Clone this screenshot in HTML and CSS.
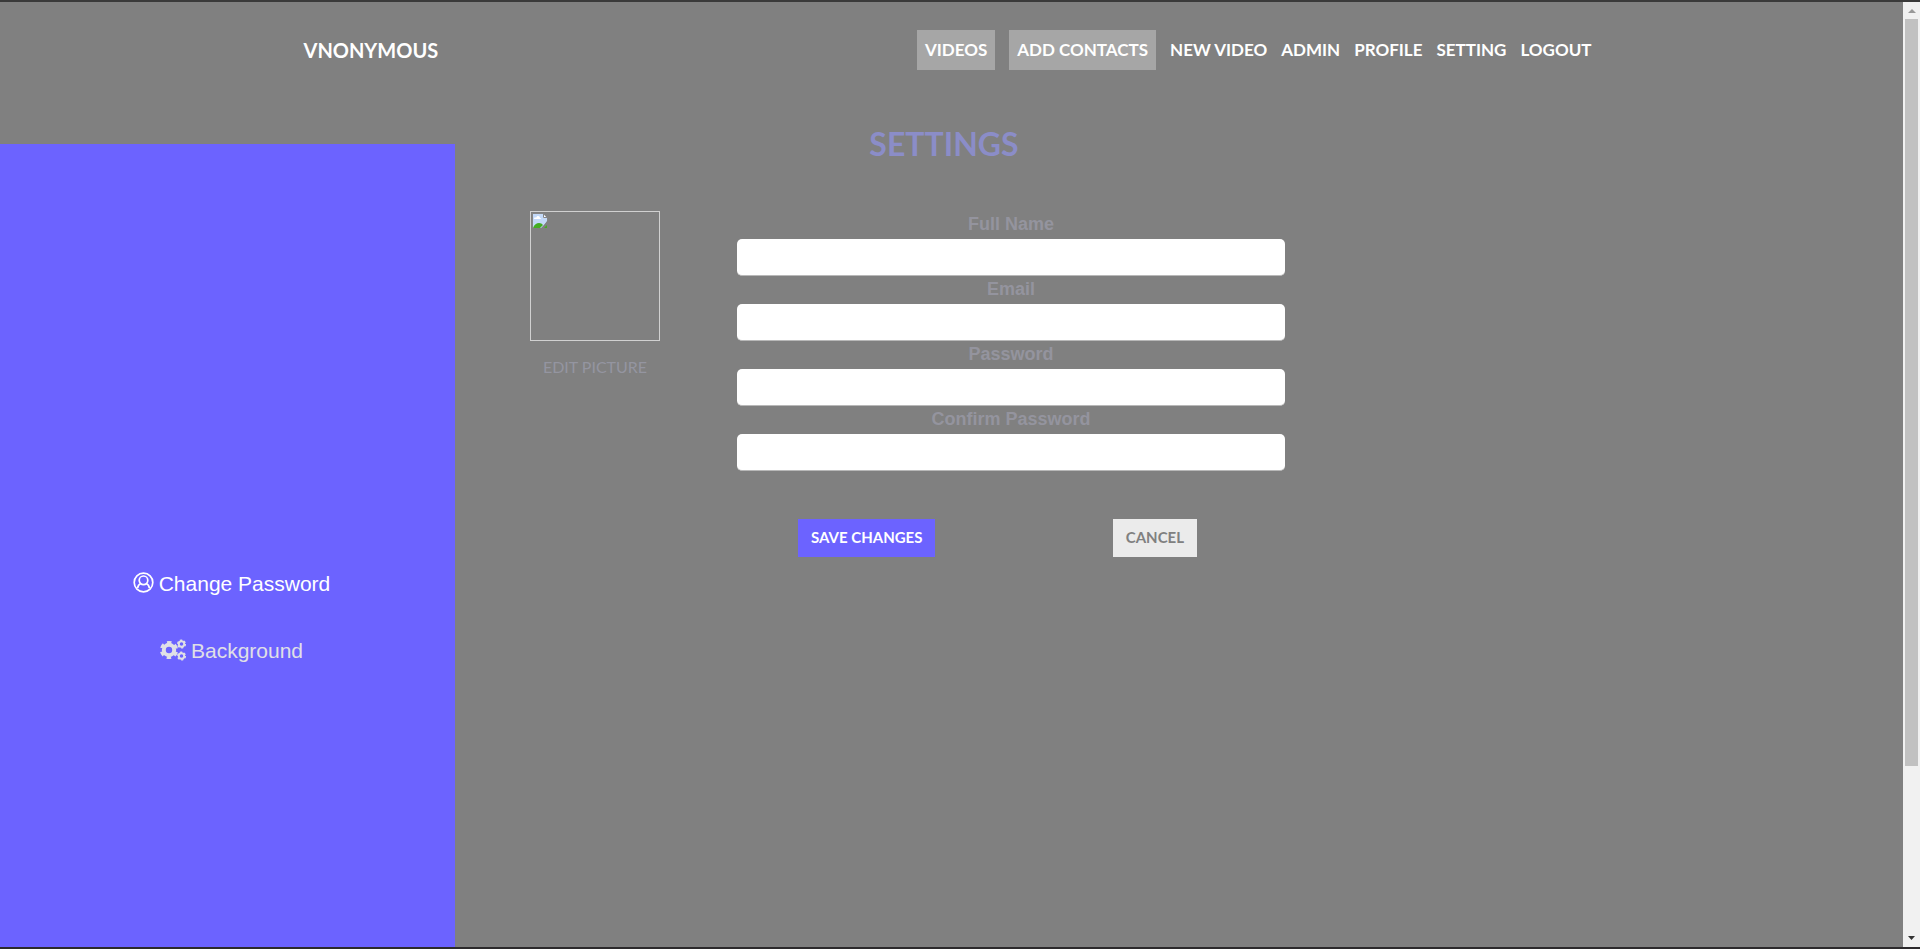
FILE: index.html
```html
<!DOCTYPE html>
<html lang="en">
<head>
<meta charset="utf-8">
<title>Settings</title>
<link rel="stylesheet" href="styles.css">
</head>
<body>
<div class="window">
  <div class="page">
    <header class="header">
      <a class="brand" href="#">VNONYMOUS</a>
      <nav class="nav">
        <a class="boxed" href="#">VIDEOS</a>
        <a class="boxed" href="#">ADD CONTACTS</a>
        <a href="#">NEW VIDEO</a>
        <a href="#">ADMIN</a>
        <a href="#">PROFILE</a>
        <a href="#">SETTING</a>
        <a href="#">LOGOUT</a>
      </nav>
    </header>
    <div class="body">
      <aside class="sidebar">
        <a class="side-link active" href="#">
          <svg width="21" height="21" viewBox="0 0 21 21" fill="none" stroke="currentColor" stroke-width="1.7" aria-hidden="true"><circle cx="10.500" cy="10.500" r="9.300"/><circle cx="10.500" cy="8.300" r="4.300"/><path d="M7.700 11.400C5.800 12.300 4.900 13.800 4.600 16.200M13.300 11.400C15.200 12.300 16.100 13.800 16.400 16.200"/></svg>
          <span>Change Password</span>
        </a>
        <a class="side-link" href="#">
          <svg width="26" height="22" viewBox="0 0 26 22" fill="none" stroke="currentColor" aria-hidden="true"><circle cx="9" cy="11" r="5.200" stroke-width="4"/><circle cx="9" cy="11" r="7.800" stroke-width="2.600" stroke-dasharray="4.400 3.768" stroke-dashoffset="-1.884"/><circle cx="21.500" cy="5" r="2.700" stroke-width="1.900"/><circle cx="21.500" cy="5" r="3.800" stroke-width="1.500" stroke-dasharray="2.200 1.779"/><circle cx="21.500" cy="17" r="2.700" stroke-width="1.900"/><circle cx="21.500" cy="17" r="3.800" stroke-width="1.500" stroke-dasharray="2.200 1.779"/></svg>
          <span>Background</span>
        </a>
      </aside>
      <main class="content">
        <h1>SETTINGS</h1>
        <div class="profile">
          <div class="picture">
            <div class="picture-frame" role="img" aria-label="Profile picture">
              <svg width="16" height="16" viewBox="0 0 16 16" aria-hidden="true"><path fill="#c3d9f8" d="M1 1h10l4 4v3l-5 7H1z"/><path fill="#fff" d="M2 6c0-2 2-2 2-1 1-3 4-2 4 0 1 0 1 1 1 1zM11 1v4h4z"/><path fill="#43ad22" d="M1 15c2-6 8-6 10-3l-3 3zM12 15l3-3v3z"/><path fill="none" stroke="#858585" d="M.5 15V.5h11l4 4V8M11.500.5v4h4"/><path stroke="#808080" stroke-width="1.500" d="M9 16l7-7"/></svg>
            </div>
            <a class="edit" href="#">EDIT PICTURE</a>
          </div>
          <form class="form">
            <label for="name">Full Name</label>
            <input id="name" type="text">
            <label for="email">Email</label>
            <input id="email" type="email">
            <label for="password">Password</label>
            <input id="password" type="password">
            <label for="confirm">Confirm Password</label>
            <input id="confirm" type="password">
            <div class="actions">
              <button class="save" type="submit">SAVE CHANGES</button>
              <button class="cancel" type="button">CANCEL</button>
            </div>
          </form>
        </div>
      </main>
    </div>
  </div>
  <div class="scrollbar" aria-hidden="true">
    <svg width="17" height="17" viewBox="0 0 17 17"><path fill="#999" d="M5 11l4-4 4 4z"/></svg>
    <div class="track"><div class="thumb"></div></div>
    <svg width="17" height="17" viewBox="0 0 17 17"><path fill="#333" d="M5 6h7l-3.500 4z"/></svg>
  </div>
</div>
</body>
</html>
```
FILE: styles.css
```css
* { box-sizing: border-box; }
body {
  margin: 0;
  font-family: "Liberation Sans", Arial, sans-serif;
  background: #808080;
}
a { color: inherit; text-decoration: none; }
svg { display: block; flex: none; }
.window {
  display: flex;
  min-height: 100vh;
  border-top: 2px solid #3a3a3a;
  border-bottom: 2px solid #2c2a2c;
}
.page {
  flex: 1;
  min-width: 0;
  display: flex;
  flex-direction: column;
}
.header {
  width: 100%;
  max-width: 1296px;
  margin: 0 auto;
  padding: 28px 8px 28px 0;
  display: flex;
  justify-content: space-between;
  align-items: center;
  color: #fff;
  font-family: Lato, sans-serif;
  font-weight: 700;
  line-height: 40px;
}
.brand { font-size: 20px; }
.nav {
  display: flex;
  align-items: center;
  gap: 14px;
  font-size: 17px;
  white-space: nowrap;
}
.boxed {
  padding: 0 8px;
  background: #a6a6a6;
}
.body { flex: 1; display: flex; }
.sidebar {
  flex: none;
  width: 455px;
  margin-top: 46px;
  padding: 424px 0 0 8px;
  background: #6c63ff;
  display: flex;
  flex-direction: column;
  align-items: center;
  gap: 35px;
}
.side-link {
  display: flex;
  align-items: center;
  gap: 5px;
  color: #e0e0e6;
  font-size: 21px;
  line-height: 32px;
}
.side-link svg { margin-bottom: 3px; }
.side-link.active { color: #fff; }
.content {
  flex: 1;
  max-width: 978px;
  padding-top: 26px;
}
h1 {
  margin: 0 0 47px;
  text-align: center;
  color: #8b8dc8;
  font-family: Lato, sans-serif;
  font-size: 32px;
  line-height: 40px;
  font-weight: 700;
}
.profile {
  display: grid;
  grid-template-columns: 130px minmax(0, 548px);
  gap: 77px;
  padding-left: 75px;
}
.picture { text-align: center; }
.picture-frame {
  height: 130px;
  margin-bottom: 14px;
  padding: 1px;
  border: 1px solid #d0d0d0;
}
.edit {
  color: #9495a0;
  font-family: Lato, sans-serif;
  font-size: 16px;
  line-height: 24px;
}
.form {
  display: flex;
  flex-direction: column;
}
label {
  margin-bottom: 2px;
  text-align: center;
  color: #94949e;
  font-size: 18px;
  line-height: 26px;
  font-weight: 700;
}
input {
  width: 100%;
  height: 37px;
  padding: 0 12px;
  border: 0;
  border-bottom: 1px solid #b8b8b8;
  border-radius: 5px;
  background: #fff;
  font: inherit;
}
.actions {
  display: flex;
  justify-content: space-between;
  padding: 48px 88px 0 61px;
}
button {
  height: 38px;
  padding: 0 13px 2px;
  border: 0;
  font-family: Lato, sans-serif;
  font-size: 15px;
  font-weight: 700;
}
.save { background: #6c63ff; color: #fff; }
.cancel { background: #ebebeb; color: #808080; }
.scrollbar {
  width: 17px;
  display: flex;
  flex-direction: column;
  background: #f1f1f1;
}
.track { flex: 1; padding: 0 2px; }
.thumb { height: 82%; background: #c1c1c1; }
```
